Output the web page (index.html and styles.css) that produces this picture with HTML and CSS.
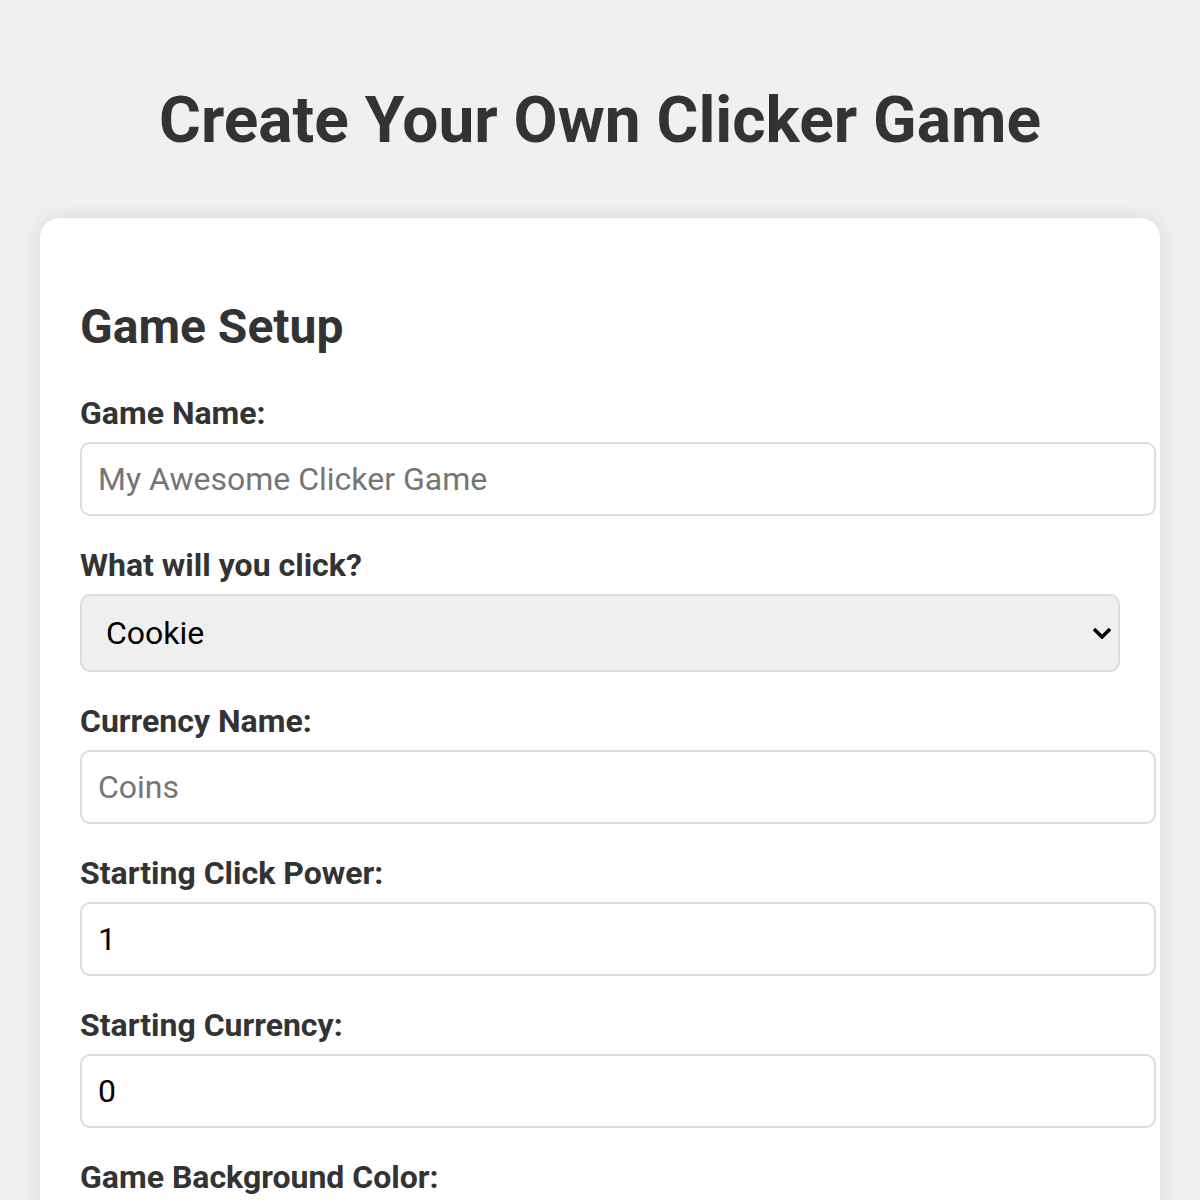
FILE: index.html
```html
<!DOCTYPE html>
<html lang="en">
<head>
  <meta charset="UTF-8">
  <meta name="viewport" content="width=device-width, initial-scale=1.0">
  <title>Clicker Game Creator</title>
  <link rel="stylesheet" href="styles.css">
</head>
<body>
  <h1>Create Your Own Clicker Game</h1>

  <div class="setup-card">
    <h2>Game Setup</h2>

    <label for="game-name">Game Name:</label>
    <input type="text" id="game-name" placeholder="My Awesome Clicker Game">

    <label for="click-object">What will you click?</label>
    <div class="select-wrap">
      <select id="click-object">
        <option>Cookie</option>
        <option>Coin</option>
        <option>Star</option>
        <option>Diamond</option>
      </select>
      <svg class="select-arrow" width="20" height="12" viewBox="0 0 20 12">
        <path d="M2 2 L10 10 L18 2" fill="none" stroke="#000" stroke-width="3.6"/>
      </svg>
    </div>

    <label for="currency-name">Currency Name:</label>
    <input type="text" id="currency-name" placeholder="Coins">

    <label for="click-power">Starting Click Power:</label>
    <input type="number" id="click-power" value="1">

    <label for="start-currency">Starting Currency:</label>
    <input type="number" id="start-currency" value="0">

    <label for="bg-color">Game Background Color:</label>
    <input type="color" id="bg-color" value="#ffffff" class="color-input">

    <button class="create-btn">Create Game</button>
  </div>
</body>
</html>
```

FILE: styles.css
```css
/* General */
body {
    font-family: Roboto, "Liberation Sans", Arial, sans-serif;
    margin: 0;
    padding: 0 40px 40px;
    background-color: #f0f0f0;
    color: #333;
}

h1 {
    font-size: 64px;
    text-align: center;
    margin: 83px 0 60px;
}

/* Card */
.setup-card {
    background-color: #fff;
    border-radius: 20px;
    padding: 40px;
    box-shadow: 0 0 20px rgba(0, 0, 0, 0.1);
}

.setup-card h2 {
    font-size: 48px;
    margin: 40px 0 39px;
}

.setup-card label {
    display: block;
    font-size: 32px;
    font-weight: bold;
    margin-bottom: 10px;
}

/* Inputs */
.setup-card input {
    display: block;
    width: 100%;
    padding: 16px;
    margin: 0 0 30px;
    font-family: inherit;
    font-size: 32px;
    color: #000;
    border: 2px solid #ddd;
    border-radius: 10px;
    background-color: #fff;
    outline: none;
}

.setup-card input::placeholder {
    color: #757575;
}

.setup-card input::-webkit-inner-spin-button {
    display: none;
}

.select-wrap {
    position: relative;
    margin-bottom: 30px;
}

.setup-card select {
    display: block;
    width: 100%;
    height: 78px;
    padding: 0 24px;
    font-family: inherit;
    font-size: 32px;
    color: #000;
    background-color: #efefef;
    border: 2px solid #ddd;
    border-radius: 10px;
    appearance: none;
    outline: none;
}

.select-arrow {
    position: absolute;
    right: 8px;
    top: 33px;
    pointer-events: none;
}

.setup-card .color-input {
    width: 120px;
    height: 70px;
    padding: 4px;
}

.create-btn {
    font-family: inherit;
    font-size: 32px;
    font-weight: bold;
    color: #fff;
    background-color: #4caf50;
    border: none;
    border-radius: 10px;
    padding: 20px 40px;
    cursor: pointer;
}
```
